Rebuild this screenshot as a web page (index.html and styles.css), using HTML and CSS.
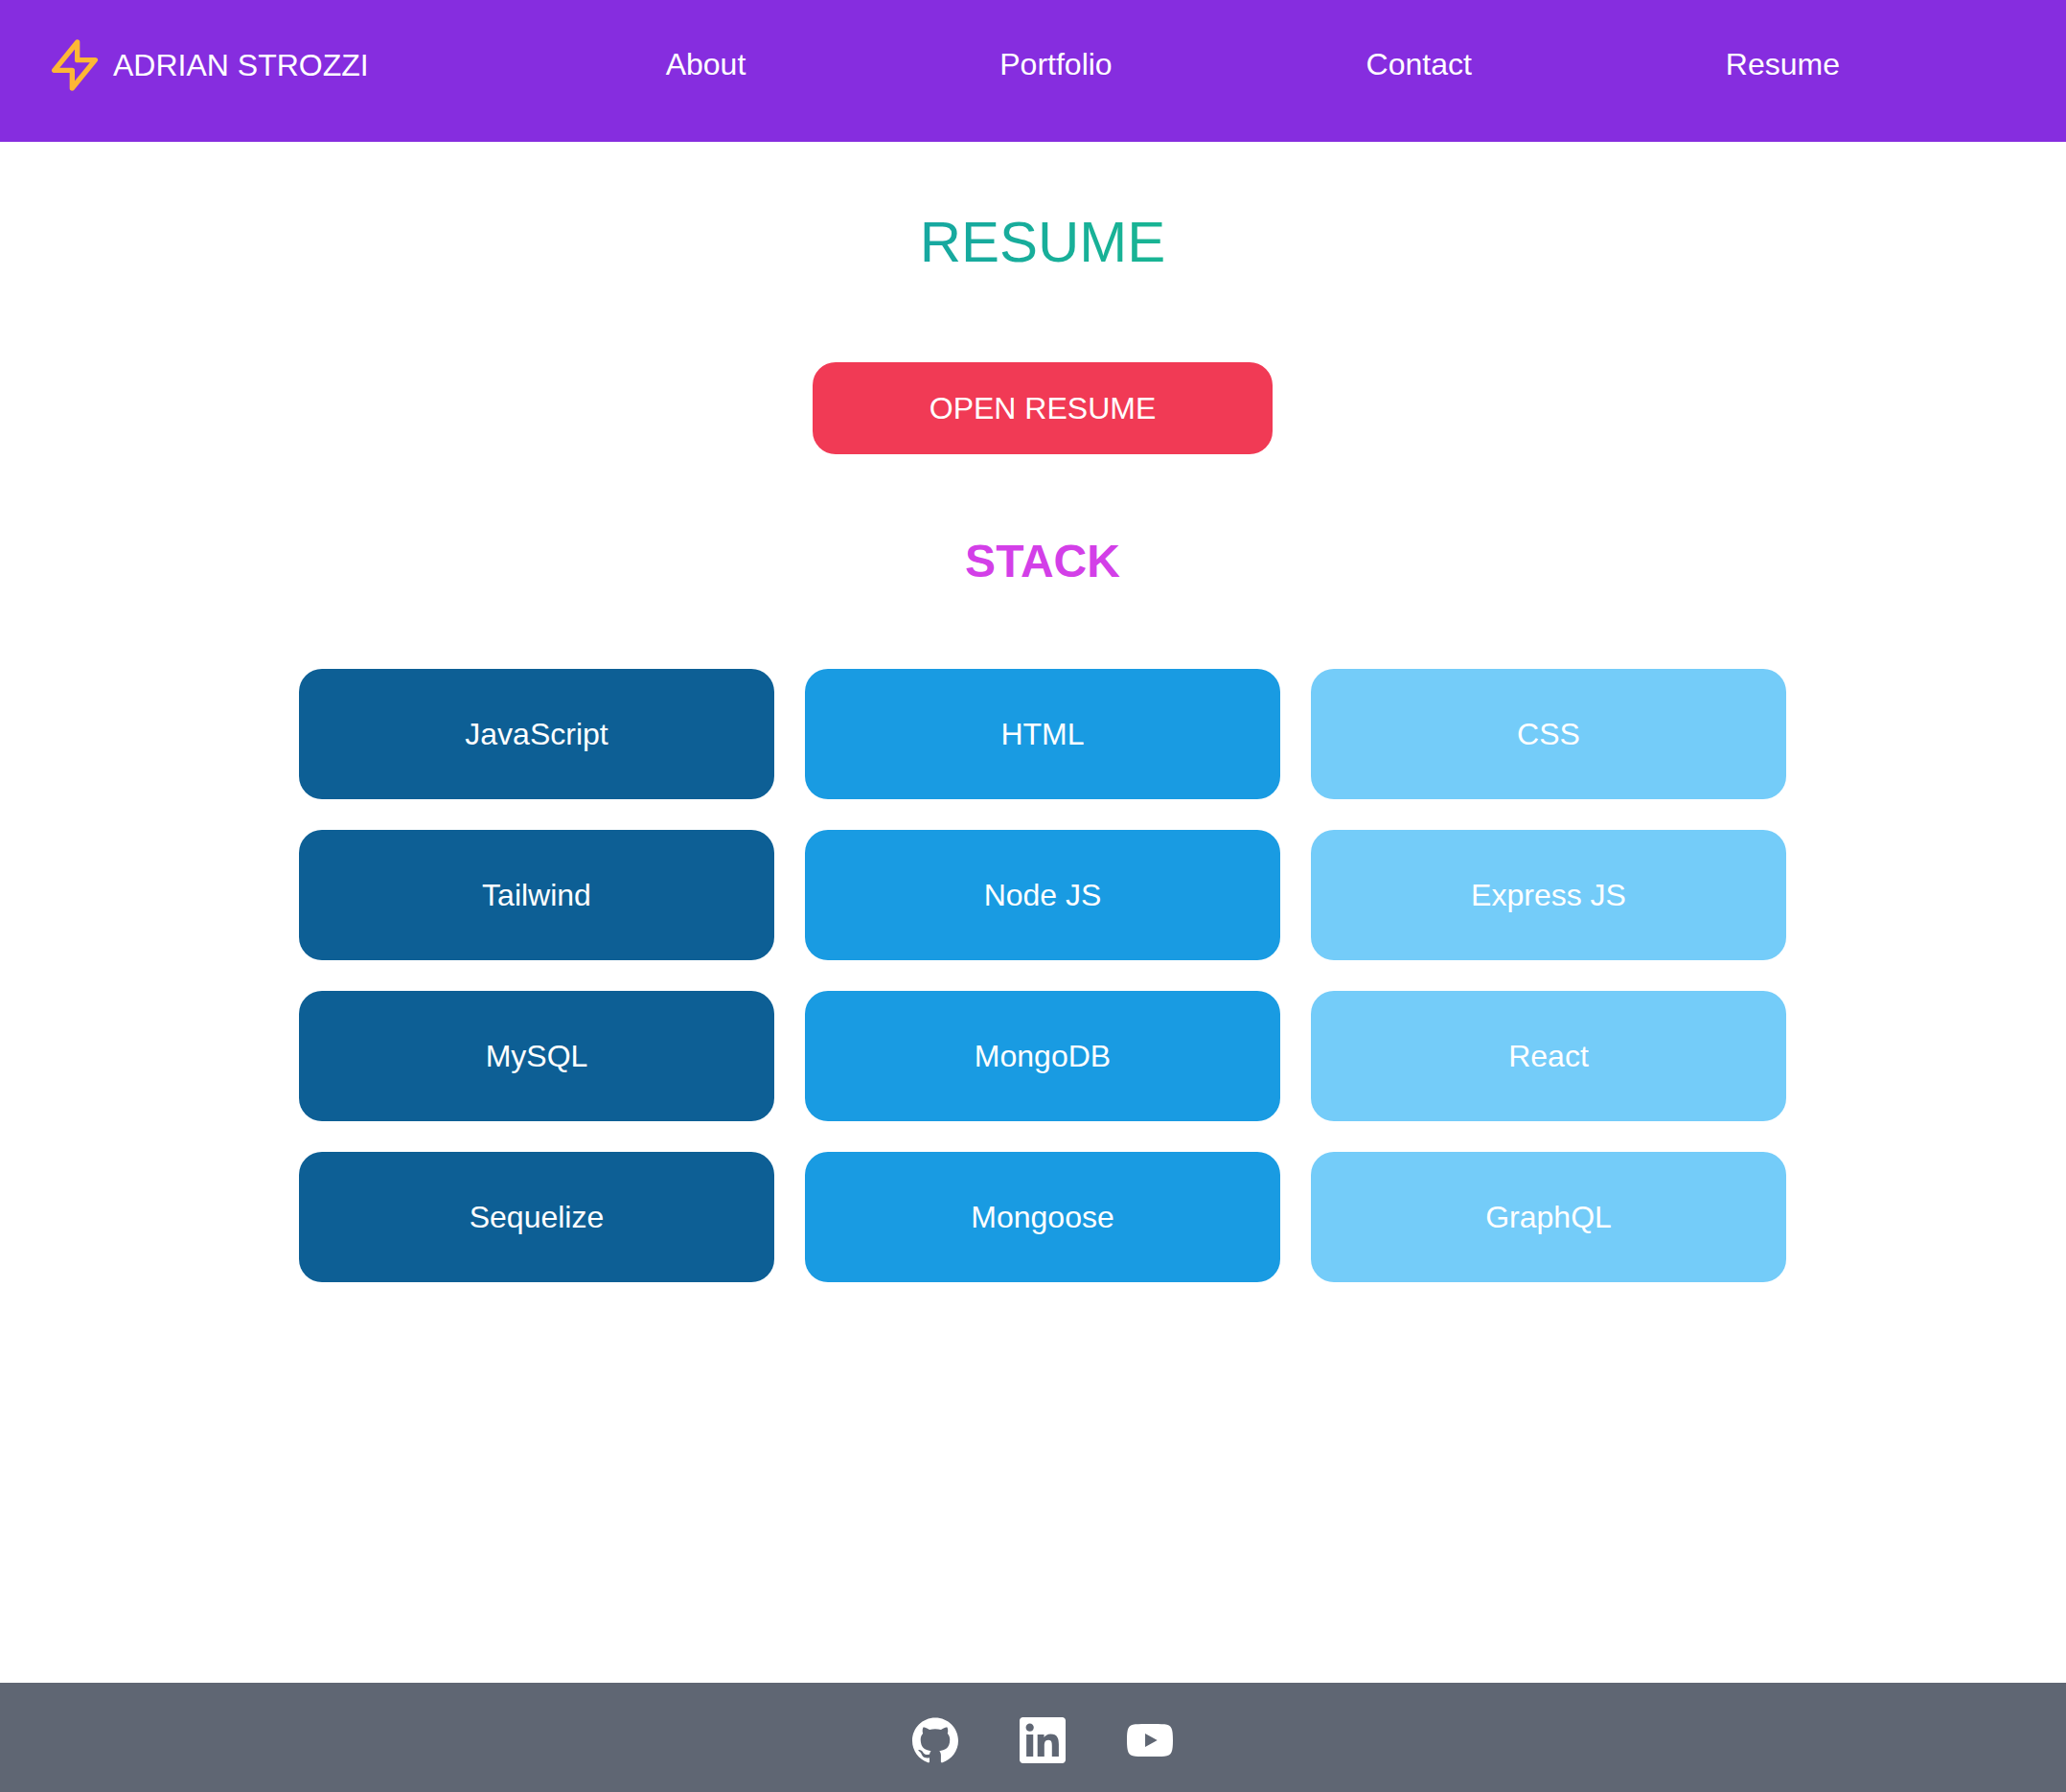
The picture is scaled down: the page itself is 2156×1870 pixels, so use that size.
FILE: index.html
```html
<!DOCTYPE html>
<html lang="en">
<head>
<meta charset="utf-8">
<meta name="viewport" content="width=device-width, initial-scale=1">
<title>Adrian Strozzi | Resume</title>
<link rel="stylesheet" href="styles.css">
</head>
<body>
<header class="header">
  <a class="brand" href="#">
    <svg class="brand-icon" viewBox="0 0 24 24" fill="none" stroke="currentColor" stroke-width="2" stroke-linecap="round" stroke-linejoin="round" aria-hidden="true"><path d="M13 10V3L4 14h7v7l9-11h-7z"/></svg>
    <span>ADRIAN STROZZI</span>
  </a>
  <nav class="nav">
    <a href="#about">About</a>
    <a href="#portfolio">Portfolio</a>
    <a href="#contact">Contact</a>
    <a href="#resume">Resume</a>
  </nav>
</header>
<main class="main">
  <h1 class="title">RESUME</h1>
  <button class="open-button" type="button">OPEN RESUME</button>
  <h2 class="subtitle">STACK</h2>
  <ul class="stack">
    <li class="tile dark">JavaScript</li>
    <li class="tile medium">HTML</li>
    <li class="tile light">CSS</li>
    <li class="tile dark">Tailwind</li>
    <li class="tile medium">Node JS</li>
    <li class="tile light">Express JS</li>
    <li class="tile dark">MySQL</li>
    <li class="tile medium">MongoDB</li>
    <li class="tile light">React</li>
    <li class="tile dark">Sequelize</li>
    <li class="tile medium">Mongoose</li>
    <li class="tile light">GraphQL</li>
  </ul>
</main>
<footer class="footer">
  <a href="#github" aria-label="GitHub"><svg class="social-icon" viewBox="0 0 24 24" aria-hidden="true"><path d="M12 .297c-6.63 0-12 5.373-12 12 0 5.303 3.438 9.8 8.205 11.385.6.113.82-.258.82-.577 0-.285-.01-1.04-.015-2.04-3.338.724-4.042-1.61-4.042-1.61C4.422 18.07 3.633 17.7 3.633 17.7c-1.087-.744.084-.729.084-.729 1.205.084 1.838 1.236 1.838 1.236 1.07 1.835 2.809 1.305 3.495.998.108-.776.417-1.305.76-1.605-2.665-.3-5.466-1.332-5.466-5.93 0-1.31.465-2.38 1.235-3.22-.135-.303-.54-1.523.105-3.176 0 0 1.005-.322 3.3 1.23.96-.267 1.98-.399 3-.405 1.02.006 2.04.138 3 .405 2.28-1.552 3.285-1.23 3.285-1.23.645 1.653.24 2.873.12 3.176.765.84 1.23 1.91 1.23 3.22 0 4.61-2.805 5.625-5.475 5.92.42.36.81 1.096.81 2.22 0 1.606-.015 2.896-.015 3.286 0 .315.21.69.825.57C20.565 22.092 24 17.592 24 12.297c0-6.627-5.373-12-12-12"/></svg></a>
  <a href="#linkedin" aria-label="LinkedIn"><svg class="social-icon" viewBox="0 0 24 24" aria-hidden="true"><path d="M20.447 20.452h-3.554v-5.569c0-1.328-.027-3.037-1.852-3.037-1.853 0-2.136 1.445-2.136 2.939v5.667H9.351V9h3.414v1.561h.046c.477-.9 1.637-1.85 3.37-1.85 3.601 0 4.267 2.37 4.267 5.455v6.286zM5.337 7.433c-1.144 0-2.063-.926-2.063-2.065 0-1.138.92-2.063 2.063-2.063 1.14 0 2.064.925 2.064 2.063 0 1.139-.925 2.065-2.064 2.065zm1.782 13.019H3.555V9h3.564v11.452zM22.225 0H1.771C.792 0 0 .774 0 1.729v20.542C0 23.227.792 24 1.771 24h20.451C23.2 24 24 23.227 24 22.271V1.729C24 .774 23.2 0 22.222 0h.003z"/></svg></a>
  <a href="#youtube" aria-label="YouTube"><svg class="social-icon" viewBox="0 0 24 24" aria-hidden="true"><path d="M19.615 3.684c-3.604-.246-11.631-.245-15.23 0-3.897.266-4.356 2.62-4.385 8.316.029 5.685.484 8.049 4.385 8.316 3.6.245 11.626.246 15.23 0 3.897-.266 4.356-2.62 4.385-8.316-.029-5.685-.484-8.049-4.385-8.316zM9.52 15.55v-7.1L15.85 12z"/></svg></a>
</footer>
</body>
</html>
```
FILE: styles.css
```css
* {
  box-sizing: border-box;
}

body {
  margin: 0;
  min-height: 100vh;
  display: flex;
  flex-direction: column;
  background: #fff;
  color: #fff;
  font-family: "Liberation Sans", Arial, sans-serif;
  font-size: 32px;
  line-height: 48px;
}

a {
  color: inherit;
  text-decoration: none;
}

.header {
  display: flex;
  align-items: center;
  padding: 36px 236px 48px 46px;
  background: #862ddf;
}

.brand {
  display: flex;
  align-items: center;
  gap: 8px;
}

.brand-icon {
  width: 64px;
  height: 64px;
  color: #fdb735;
}

.nav {
  flex: 1;
  display: flex;
  justify-content: space-between;
  margin-left: 310px;
  padding-bottom: 2px;
}

.main {
  flex: 1;
  display: flex;
  flex-direction: column;
  align-items: center;
  padding: 73px 20px 72px 40px;
}

.title {
  width: 100%;
  margin: 0;
  font-size: 60px;
  font-weight: 400;
  line-height: 64px;
  text-align: center;
  color: transparent;
  background: linear-gradient(to right, #0f78d0, #20e464);
  background-clip: text;
}

.open-button {
  width: 480px;
  height: 96px;
  margin: 93px 0 0;
  border: 0;
  border-radius: 24px;
  background: #f13a55;
  color: inherit;
  font: inherit;
}

.subtitle {
  margin: 80px 0;
  color: #d33fe8;
  font-size: 48px;
  font-weight: 700;
  line-height: 64px;
}

.stack {
  width: 100%;
  max-width: 1552px;
  display: grid;
  grid-template-columns: repeat(3, 1fr);
  gap: 32px;
  margin: 0;
  padding: 0;
  list-style: none;
}

.tile {
  padding: 44px 16px;
  border-radius: 24px;
  text-align: center;
}

.dark {
  background: #0d5f95;
}

.medium {
  background: #199be2;
}

.light {
  background: #74ccf9;
}

.footer {
  display: flex;
  justify-content: center;
  gap: 64px;
  padding: 36px 20px 30px 40px;
  background: #5f6673;
}

.social-icon {
  display: block;
  width: 48px;
  height: 48px;
  fill: currentColor;
}
```
